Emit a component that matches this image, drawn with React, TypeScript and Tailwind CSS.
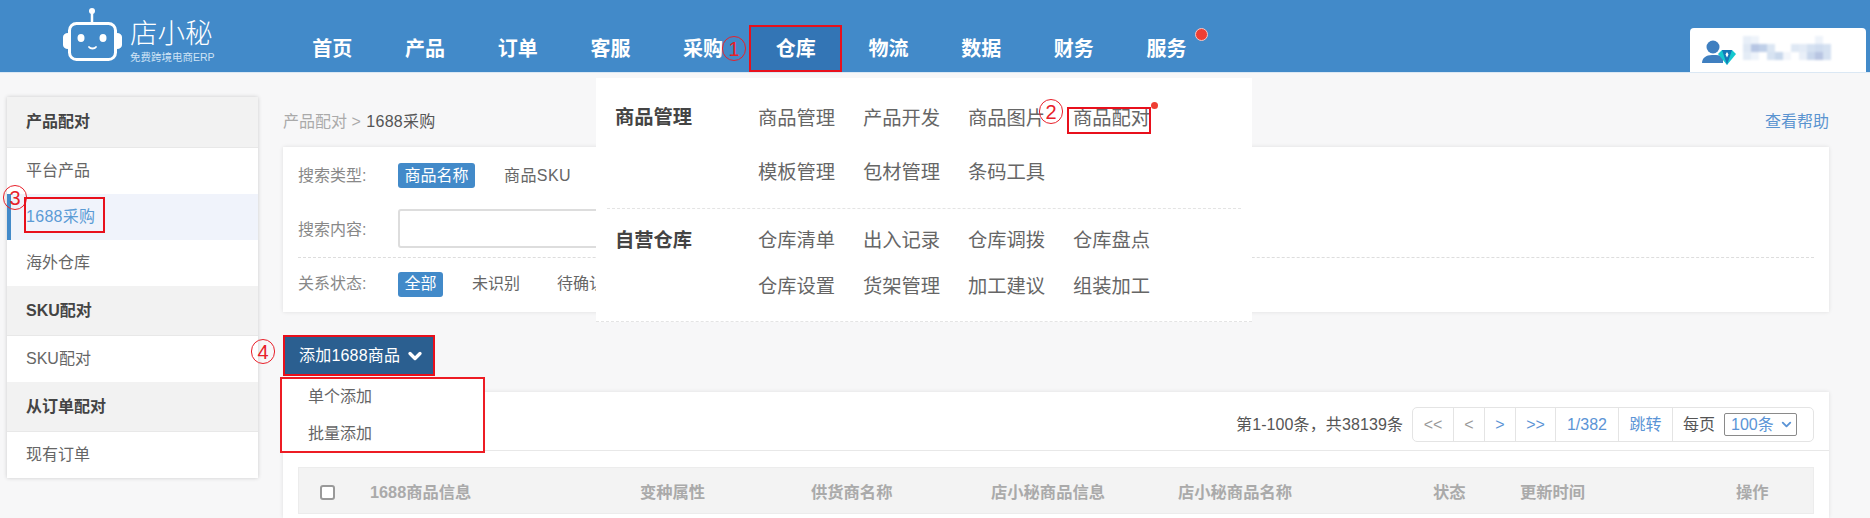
import { ChevronDown } from 'lucide-react';

const FONT = '[font-family:"Liberation_Sans","Noto_Sans_CJK_SC",sans-serif]';

const NAV = ['首页', '产品', '订单', '客服', '采购', '仓库', '物流', '数据', '财务', '服务'];

const SIDE = [
  { title: '产品配对', items: ['平台产品', '1688采购', '海外仓库'] },
  { title: 'SKU配对', items: ['SKU配对'] },
  { title: '从订单配对', items: ['现有订单'] },
];

const MENU = [
  {
    title: '商品管理',
    rows: [
      ['商品管理', '产品开发', '商品图片', '商品配对'],
      ['模板管理', '包材管理', '条码工具'],
    ],
  },
  {
    title: '自营仓库',
    rows: [
      ['仓库清单', '出入记录', '仓库调拨', '仓库盘点'],
      ['仓库设置', '货架管理', '加工建议', '组装加工'],
    ],
  },
];

const COLUMNS = [
  { label: '1688商品信息', width: 'w-[270px]' },
  { label: '变种属性', width: 'w-[171px]' },
  { label: '供货商名称', width: 'w-[180px]' },
  { label: '店小秘商品信息', width: 'w-[187px]' },
  { label: '店小秘商品名称', width: 'w-[255px]' },
  { label: '状态', width: 'w-[87px]' },
  { label: '更新时间', width: 'w-[216px]' },
  { label: '操作', width: 'w-[78px]' },
];

const MOSAIC: [number, number, string][] = [
  [0, 0, '#e8eff8'], [1, 0, '#eef3fa'], [9, 0, '#eef3fa'],
  [0, 1, '#dfe8f4'], [1, 1, '#b7c6e4'], [2, 1, '#bfcfe8'], [3, 1, '#dbe6f3'],
  [6, 1, '#dfe8f4'], [7, 1, '#e3ebf6'], [8, 1, '#d5e1f1'], [9, 1, '#cfdcef'], [10, 1, '#d5e1f1'],
  [0, 2, '#e4ecf6'], [1, 2, '#eef3fa'], [3, 2, '#d7e3f2'], [4, 2, '#c9d8ec'], [5, 2, '#f3f6fb'],
  [7, 2, '#e9eff8'], [8, 2, '#c9d7ec'], [9, 2, '#b8c5e2'], [10, 2, '#d5e1f1'],
];

function Logo() {
  return (
    <div className="w-[286px] h-[72px] flex pl-[62px] pt-[6px] text-white">
      <svg width="62" height="58" viewBox="0 0 62 58" fill="none" className="shrink-0">
        <circle cx="30" cy="5" r="3" fill="white" />
        <path d="M30 7v9" stroke="white" strokeWidth="2.5" />
        <rect x="7.5" y="17.5" width="46" height="36" rx="7" stroke="white" strokeWidth="3" />
        <path d="M6 27c-3 0-5 2-5 4v8c0 2 2 4 5 4zM55 27c3 0 5 2 5 4v8c0 2-2 4-5 4z" fill="white" />
        <ellipse cx="19" cy="32" rx="3.5" ry="4" fill="white" />
        <ellipse cx="41" cy="32" rx="3.5" ry="4" fill="white" />
        <path d="M27 41c1.5 2 5.5 2 7 0" stroke="white" strokeWidth="1.8" strokeLinecap="round" />
      </svg>
      <div className="ml-[6px]">
        <div className="text-[27.5px] leading-[34px] mt-[11px] font-light">店小秘</div>
        <div className="text-[10.5px] leading-[13px] text-[#cfe3f5] whitespace-nowrap">免费跨境电商ERP</div>
      </div>
    </div>
  );
}

function Nav() {
  return (
    <nav className="flex self-end h-[47px]">
      {NAV.map((name) => (
        <a
          key={name}
          className={
            name === '仓库'
              ? 'relative w-[92.7px] flex items-center justify-center text-[20px] font-bold text-white bg-[#3375b5] border-2 border-[#e8101c]'
              : 'relative w-[92.7px] flex items-center justify-center text-[20px] font-bold text-white'
          }
        >
          {name}
          {name === '服务' && (
            <span className="absolute left-[75px] top-[3px] w-[13px] h-[13px] rounded-full bg-[#ef3e33] border border-[#f6c9c4]" />
          )}
        </a>
      ))}
    </nav>
  );
}

function UserTab() {
  return (
    <div className="ml-auto mr-[4px] self-end w-[176px] h-[44px] bg-white rounded-t-[4px] flex items-start pl-[12px] pt-[10px]">
      <svg width="34" height="26" viewBox="0 0 34 26" className="shrink-0 mt-[2px]">
        <circle cx="11" cy="7" r="6.5" fill="#3f7fc0" />
        <path d="M0 23c0-5 4-8 10-8h4c3 0 6 1 7 3v5z" fill="#3f7fc0" />
        <path d="M16 14l4-4h10l4 4-9 11z" fill="#14c8cf" />
        <path d="M20 10h10l-5 15z" fill="#1478b8" />
        <path d="M25 12l1.5 2.5-1.5 3-1.5-3z" fill="white" />
      </svg>
      <svg width="96" height="26" viewBox="0 0 96 26" className="ml-[7px] -mt-[2px] blur-[1px]">
        {MOSAIC.map(([col, row, color]) => (
          <rect key={`${col}-${row}`} x={col * 8} y={row * 8} width="8" height="8" fill={color} />
        ))}
      </svg>
    </div>
  );
}

function Sidebar() {
  return (
    <aside className="ml-[7px] mt-[24px] w-[251px] h-[381px] bg-white shadow-[0_0_4px_rgba(0,0,0,0.18)] text-[16px] shrink-0">
      {SIDE.map((group, i) => (
        <div key={group.title}>
          <div
            className={
              i === 0
                ? 'h-[51px] pl-[19px] flex items-center bg-[#f2f2f2] border-b border-[#e8e8e8] font-bold text-[#444]'
                : 'h-[50px] pl-[19px] flex items-center bg-[#f2f2f2] border-b border-[#e8e8e8] font-bold text-[#444]'
            }
          >
            {group.title}
          </div>
          {group.items.map((item) =>
            item === '1688采购' ? (
              <div key={item} className="h-[46px] pl-[15px] flex items-center bg-[#f0f3fb] border-l-[4px] border-[#428ac9] text-[#5b9bd5] tracking-[0.3px]">
                {item}
              </div>
            ) : (
              <div key={item} className="h-[46px] pl-[19px] flex items-center text-[#666]">
                {item}
              </div>
            ),
          )}
        </div>
      ))}
    </aside>
  );
}

function Badge({ children }: { children: string }) {
  return <span className="h-[25px] px-[6.5px] flex items-center rounded-[3px] bg-[#428ac9] text-white">{children}</span>;
}

function SearchCard() {
  return (
    <section className="h-[165px] bg-white shadow-[0_0_4px_rgba(0,0,0,0.1)] px-[15px] pt-[16px] text-[16px]">
      <div className="flex items-center h-[25px]">
        <span className="w-[100px] text-[#888]">搜索类型:</span>
        <Badge>商品名称</Badge>
        <span className="ml-[29px] text-[#666] tracking-[0.4px]">商品SKU</span>
      </div>
      <div className="flex items-center h-[39px] mt-[21px]">
        <span className="w-[100px] pt-[2px] text-[#888]">搜索内容:</span>
        <div className="w-[400px] h-[39px] border-2 border-[#ddd] rounded-[3px] bg-white" />
      </div>
      <div className="mt-[9px] border-t border-dashed border-[#ddd] pt-[14px] flex items-center h-[39px]">
        <span className="w-[100px] text-[#888]">关系状态:</span>
        <Badge>全部</Badge>
        <span className="ml-[29px] text-[#666]">未识别</span>
        <span className="ml-[37px] text-[#666]">待确认</span>
      </div>
    </section>
  );
}

function Pagination() {
  return (
    <div className="flex items-center gap-[9px] h-[35px] text-[16px]">
      <span className="text-[#555] whitespace-nowrap tracking-[0.1px]">第1-100条，共38139条</span>
      <div className="flex items-stretch w-[402px] h-[35px] border border-[#e4e4e4] rounded-[5px] text-[#5b94d6]">
        <span className="w-[41px] flex items-center justify-center border-r border-[#e4e4e4] text-[#999]">&lt;&lt;</span>
        <span className="w-[31px] flex items-center justify-center border-r border-[#e4e4e4] text-[#999]">&lt;</span>
        <span className="w-[31px] flex items-center justify-center border-r border-[#e4e4e4]">&gt;</span>
        <span className="w-[40px] flex items-center justify-center border-r border-[#e4e4e4]">&gt;&gt;</span>
        <span className="w-[63px] flex items-center justify-center border-r border-[#e4e4e4]">1/382</span>
        <span className="w-[54px] flex items-center justify-center border-r border-[#e4e4e4]">跳转</span>
        <span className="ml-[10px] flex items-center text-[#555]">每页</span>
        <span className="ml-[9px] my-[5px] w-[73px] flex items-center pl-[6px] border border-[#8a8a8a] rounded-[2px]">
          100条
          <ChevronDown className="w-[15px] h-[15px] ml-[5px]" strokeWidth={3} />
        </span>
      </div>
    </div>
  );
}

function ListCard() {
  return (
    <section className="mt-[16px] h-[126px] bg-white shadow-[0_0_4px_rgba(0,0,0,0.1)] text-[16px]">
      <div className="h-[59px] pt-[15px] pr-[15px] flex justify-end border-b border-[#e8e8e8]">
        <Pagination />
      </div>
      <div className="mx-[15px] mt-[16px] h-[47px] pt-[4px] flex items-center bg-[#f3f3f3] border border-[#ececec] font-bold text-[16.3px] text-[#aaa]">
        <div className="w-[71px] pl-[21px] shrink-0">
          <div className="w-[15px] h-[15px] border-2 border-[#999] rounded-[3px] bg-white" />
        </div>
        {COLUMNS.map((col) => (
          <span key={col.label} className={`${col.width} shrink-0`}>
            {col.label}
          </span>
        ))}
      </div>
    </section>
  );
}

function Main() {
  return (
    <main className="ml-[25px] w-[1546px] shrink-0">
      <div className="h-[74px] pt-[24px] flex items-center justify-between text-[16px]">
        <span className="text-[#aaa]">
          产品配对 &gt; <span className="ml-[1px] text-[#555] tracking-[0.3px]">1688采购</span>
        </span>
        <a className="text-[#5b94d0]">查看帮助</a>
      </div>
      <SearchCard />
      <button className="mt-[23px] w-[152px] h-[41px] flex items-center pl-[14px] bg-[#2b5f90] border-2 border-[#e8101c] text-white text-[16px] tracking-[0.2px]">
        添加1688商品
        <ChevronDown className="w-[20px] h-[20px] ml-[5px]" strokeWidth={4} />
      </button>
      <ListCard />
    </main>
  );
}

function MegaMenu() {
  return (
    <div className="absolute left-[596px] top-[78px] w-[656px] h-[244px] bg-white px-[11px] border-b border-dashed border-[#e4e4e4]">
      {MENU.map((group, i) => (
        <div
          key={group.title}
          className={i === 0 ? 'flex h-[131px] pt-[14px] border-b border-dashed border-[#e4e4e4]' : 'flex pt-[9px]'}
        >
          <div
            className={
              i === 0
                ? 'w-[151px] pl-[8px] font-bold text-[19.3px] text-[#444] h-[54px] leading-[52px]'
                : 'w-[151px] pl-[8px] font-bold text-[19.3px] text-[#444] h-[46px] leading-[46px]'
            }
          >
            {group.title}
          </div>
          <div>
            {group.rows.map((row, j) => (
              <div key={j} className={i === 0 ? 'flex h-[54px] items-center' : 'flex h-[46px] items-center'}>
                {row.map((item) => (
                  <span key={item} className="w-[105px] text-[19.3px] text-[#666]">
                    {item}
                  </span>
                ))}
              </div>
            ))}
          </div>
        </div>
      ))}
    </div>
  );
}

function Mark({ n, pos }: { n: number; pos: string }) {
  return (
    <span className={`absolute w-[24px] h-[25px] rounded-full border border-[#e8202a] text-[#e8202a] text-[20px] leading-none flex items-center justify-center bg-transparent ${pos}`}>
      {n}
    </span>
  );
}

export default function App() {
  return (
    <div className={`relative w-[1870px] h-[518px] overflow-hidden bg-[#f7f7f8] ${FONT}`}>
      <header className="flex h-[73px] bg-[#428ac9] border-b border-[#dbe8f4]">
        <Logo />
        <Nav />
        <UserTab />
      </header>
      <div className="flex">
        <Sidebar />
        <Main />
      </div>

      <MegaMenu />

      {/* 添加商品 dropdown */}
      <div className="absolute left-[280px] top-[377px] w-[205px] h-[76px] bg-white border-2 border-[#ed1c24] text-[16px] text-[#666] pl-[26px]">
        <div className="h-[36px] flex items-center">单个添加</div>
        <div className="h-[38px] flex items-center">批量添加</div>
      </div>

      {/* annotations */}
      <Mark n={1} pos="left-[722px] top-[36px]" />
      <Mark n={2} pos="left-[1039px] top-[99px]" />
      <Mark n={3} pos="left-[3px] top-[185px]" />
      <Mark n={4} pos="left-[251px] top-[339px]" />
      <span className="absolute left-[1067px] top-[107px] w-[84px] h-[27px] border-2 border-[#e8101c]" />
      <span className="absolute left-[1151px] top-[102px] w-[7px] h-[7px] rounded-full bg-[#ef3e33]" />
      <span className="absolute left-[24px] top-[197px] w-[81px] h-[36px] border-2 border-[#e8101c]" />
    </div>
  );
}
